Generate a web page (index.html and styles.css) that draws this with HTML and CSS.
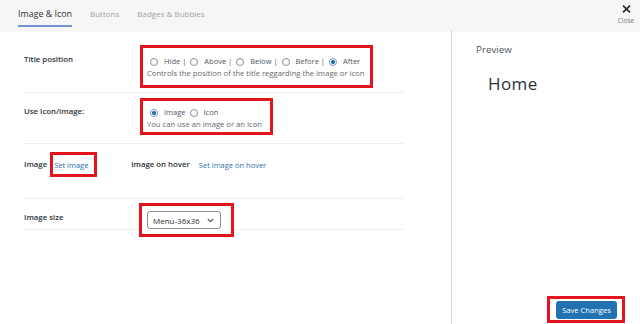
FILE: index.html
```html
<!DOCTYPE html>
<html lang="en">
<head>
<meta charset="utf-8">
<title>Image &amp; Icon</title>
<link rel="stylesheet" href="styles.css">
</head>
<body>
<div class="app">
  <header class="topbar">
    <nav class="tabs">
      <a class="tab active">Image &amp; Icon</a>
      <a class="tab">Buttons</a>
      <a class="tab">Badges &amp; Bubbles</a>
    </nav>
    <button class="close" type="button">
      <svg class="close-icon" width="9" height="8" viewBox="0 0 9 8"><path d="M1 0.6 L8 7.4 M8 0.6 L1 7.4" stroke="#2c2c2c" stroke-width="1.7" fill="none"/></svg>
      <span>Close</span>
    </button>
  </header>
  <div class="main">
    <section class="settings">
      <div class="row row-title">
        <div class="label">Title position</div>
        <div class="mark mark-title">
          <div class="radios">
            <label class="radio"><input type="radio" name="tp">Hide |</label>
            <label class="radio"><input type="radio" name="tp">Above |</label>
            <label class="radio"><input type="radio" name="tp">Below |</label>
            <label class="radio"><input type="radio" name="tp">Before |</label>
            <label class="radio"><input type="radio" name="tp" checked>After</label>
          </div>
          <p class="desc">Controls the position of the title reggarding the image or icon</p>
        </div>
      </div>
      <div class="row row-use">
        <div class="label">Use Icon/image:</div>
        <div class="mark mark-use">
          <div class="radios">
            <label class="radio"><input type="radio" name="ui" checked>Image</label>
            <label class="radio"><input type="radio" name="ui">Icon</label>
          </div>
          <p class="desc">You can use an image or an Icon</p>
        </div>
      </div>
      <div class="row row-image">
        <div class="label label-inline">Image</div>
        <div class="mark mark-set"><a class="link">Set image</a></div>
        <div class="label label-inline label-hover">Image on hover</div>
        <a class="link link-hover">Set image on hover</a>
      </div>
      <div class="row row-size">
        <div class="label label-size">Image size</div>
        <div class="mark mark-size">
          <div class="select">
            <span>Menu-36x36</span>
            <svg width="7" height="5" viewBox="0 0 7 5"><path d="M0.8 1 L3.5 3.7 L6.2 1" stroke="#50575e" stroke-width="1.1" fill="none"/></svg>
          </div>
        </div>
      </div>
    </section>
    <aside class="preview">
      <h2 class="preview-title">Preview</h2>
      <div class="preview-home">Home</div>
      <div class="footer">
        <div class="mark mark-save"><button class="save" type="button">Save Changes</button></div>
      </div>
    </aside>
  </div>
</div>
</body>
</html>
```
FILE: styles.css
```css
* { box-sizing: border-box; }
html, body { margin: 0; padding: 0; }
body {
  width: 640px;
  height: 324px;
  overflow: hidden;
  background: #fff;
  font-family: "Open Sans", "Noto Sans", sans-serif;
  color: #1d2327;
}
.app { width: 640px; height: 324px; display: flex; flex-direction: column; }

/* top bar */
.topbar {
  height: 30px;
  flex: none;
  background: #f6f6f6;
  display: flex;
  align-items: flex-start;
  box-shadow: 0 1px 2px rgba(0,0,0,0.07);
  position: relative;
  z-index: 1;
}
.tabs { display: flex; padding-left: 18px; gap: 18px; }
.tab {
  font-size: 8px;
  line-height: 11px;
  padding-top: 8px;
  padding-bottom: 6px;
  color: #a3a3a3;
  border-bottom: 2px solid transparent;
  white-space: nowrap;
}
.tab.active { font-size: 8.9px; color: #333; font-weight: 500; border-bottom-color: #7293cf; }
.close {
  margin-left: auto;
  margin-right: 4px;
  padding: 5px 0 0;
  border: 0;
  background: none;
  display: flex;
  flex-direction: column;
  align-items: center;
  font-family: inherit;
  font-size: 6.6px;
  line-height: 9px;
  color: #777;
  width: 20px;
}
.close-icon { display: block; margin-bottom: 3px; }

/* main */
.main { flex: 1; display: flex; min-height: 0; }
.settings { width: 451px; flex: none; padding-left: 24px; }
.preview {
  flex: 1;
  border-left: 1px solid #d6d6d6;
  display: flex;
  flex-direction: column;
  padding: 0 15px 1px 24px;
}

.row {
  width: 379px;
  display: flex;
  align-items: flex-start;
  border-bottom: 1px solid #eeeeee;
}
.label {
  width: 116px;
  flex: none;
  font-size: 7.8px;
  line-height: 10px;
  font-weight: 600;
  color: #2c3338;
  white-space: nowrap;
}
.mark { border: 3px solid #e3141d; background: #fff; flex: none; }

.row-title { padding: 15px 0 4px; }
.row-title .label { margin-top: 9px; }
.mark-title { width: 233px; height: 43px; padding: 8px 4px 0; }

.row-use { padding: 5px 0 8px; }
.row-use .label { margin-top: 8px; }
.mark-use { width: 133px; height: 37px; padding: 6px 4px 0; }

.radios { display: flex; align-items: center; height: 11px; padding-left: 3px; }
.radio {
  display: inline-flex;
  flex: none;
  align-items: center;
  gap: 6px;
  margin-right: 4px;
  font-size: 7.5px;
  line-height: 11px;
  color: #50575e;
  white-space: nowrap;
}
.radio input {
  -webkit-appearance: none;
  appearance: none;
  margin: 0;
  width: 8px;
  height: 8px;
  border: 1px solid #8c8f94;
  border-radius: 50%;
  background: #fff;
  flex: none;
}
.radio input:checked {
  border-color: #7d93b6;
  background: radial-gradient(circle, #2271b1 0 1.8px, #fff 2.3px);
}
.desc {
  margin: 1px 0 0;
  font-size: 7.65px;
  line-height: 11px;
  color: #646970;
  white-space: nowrap;
}

.row-image { padding: 8px 0 21px; }
.label-inline { width: auto; margin-top: 7px; margin-right: 3px; }
.mark-set { width: 47px; height: 25px; padding: 5px 0 0 1px; }
.link {
  font-size: 7.5px;
  line-height: 11px;
  color: #2a6fb1;
  white-space: nowrap;
}
.mark-set .link { display: block; }
.label-hover { margin-left: 34px; margin-right: 9px; }
.link-hover { margin-top: 8px; }

.row-size { padding-top: 4px; }
.label-size { width: 115px; margin-top: 9px; }
.mark-size {
  width: 95px;
  height: 34px;
  margin-bottom: -8px;
  padding: 5px 0 0 5px;
}
.select {
  width: 74px;
  height: 18px;
  border: 1px solid #8c8f94;
  border-radius: 3px;
  display: flex;
  align-items: center;
  justify-content: space-between;
  padding: 0 6px 0 5px;
  font-size: 8px;
  color: #2c3338;
  white-space: nowrap;
}

/* preview */
.preview-title {
  margin: 14px 0 0;
  font-size: 9.8px;
  line-height: 12px;
  font-weight: 400;
  color: #50575e;
}
.preview-home {
  margin: 18px 0 0 12px;
  font-size: 17px;
  line-height: 20px;
  font-weight: 400;
  letter-spacing: 0.4px;
  color: #2c3338;
}
.footer { margin-top: auto; display: flex; justify-content: flex-end; }
.mark-save { padding: 2px 5px 1px 6px; }
.save {
  display: block;
  width: 61px;
  height: 18px;
  border: 0;
  border-radius: 3px;
  background: #2271b1;
  color: #fff;
  font-family: inherit;
  font-size: 7.6px;
  padding: 0;
  white-space: nowrap;
}
```
